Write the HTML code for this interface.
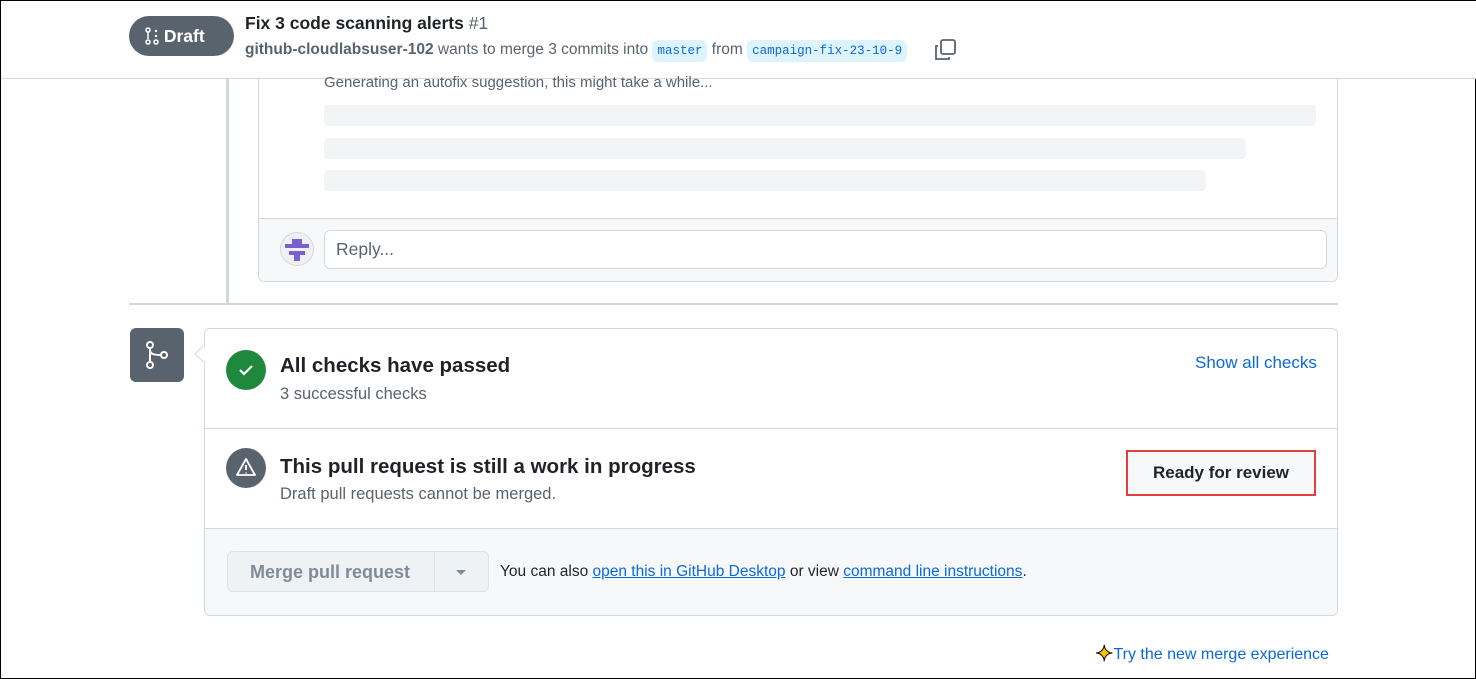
<!DOCTYPE html>
<html><head><style>
*{box-sizing:border-box;margin:0;padding:0}
body{width:1476px;height:679px;overflow:hidden;background:#fff;font-family:"Liberation Sans",sans-serif;color:#1f2328;position:relative;border:1px solid #000}
.a{position:absolute}
.sk{position:absolute;background:#f3f4f6;border-radius:4px;height:21px;left:323px}
a{color:#0969da;text-decoration:underline}
</style></head><body>
<div class="a" style="left:257px;top:78px;width:1080px;height:203px;border:1px solid #d1d9e0;border-top:none;border-radius:0 0 6px 6px;overflow:hidden">
<div class="a" style="left:0;top:139px;width:1080px;height:64px;background:#f6f8fa;border-top:1px solid #d1d9e0"></div>
</div>
<div class="a" style="left:0;top:0;width:1476px;height:78px;background:#fff;border-bottom:1px solid #d1d9e0"></div>
<div class="a" style="left:128px;top:15px;width:105px;height:40px;border-radius:20px;background:#59636e;color:#fff;font-size:17.5px;font-weight:bold;line-height:40px;padding-left:16px">
<svg width="14" height="18" viewBox="0 0 14 18" style="vertical-align:-3px"><circle cx="3" cy="3" r="2" fill="none" stroke="#fff" stroke-width="1.5"/><line x1="3" y1="5" x2="3" y2="12" stroke="#fff" stroke-width="1.5"/><circle cx="3" cy="15" r="2" fill="none" stroke="#fff" stroke-width="1.5"/><circle cx="11" cy="4" r="1.2" fill="#fff"/><circle cx="11" cy="9" r="1.2" fill="#fff"/><circle cx="11" cy="15" r="2" fill="none" stroke="#fff" stroke-width="1.5"/></svg> Draft</div>
<div class="a" style="left:244px;top:12px;font-size:17.5px;font-weight:bold;white-space:nowrap">Fix 3 code scanning alerts <span style="font-weight:normal;color:#59636e">#1</span></div>
<div class="a" style="left:244px;top:38px;font-size:15.5px;color:#59636e;white-space:nowrap;line-height:22px"><b style="color:#59636e">github-cloudlabsuser-102</b> wants to merge 3 commits into <span style="font-family:'Liberation Mono',monospace;font-size:12.5px;color:#0969da;background:#ddf4ff;padding:4px 5px;border-radius:6px">master</span> from <span style="font-family:'Liberation Mono',monospace;font-size:12.5px;color:#0969da;background:#ddf4ff;padding:4px 5px;border-radius:6px">campaign-fix-23-10-9</span></div>
<svg class="a" style="left:933px;top:38px" width="22" height="22" viewBox="0 0 22 22" fill="none" stroke="#59636e" stroke-width="1.8"><rect x="7" y="1" width="14" height="14" rx="2"/><path d="M4 7H2v13h13v-2"/></svg>

<div class="a" style="left:225px;top:78px;width:3px;height:225px;background:#d1d9e0"></div>
<div class="a" style="left:323px;top:73px;font-size:15px;color:#59636e">Generating an autofix suggestion, this might take a while...</div>
<div class="sk" style="top:104px;width:992px"></div>
<div class="sk" style="top:137px;width:922px"></div>
<div class="sk" style="top:169px;width:882px"></div>
<div class="a" style="left:279px;top:231px;width:34px;height:34px;border-radius:50%;background:#eef0f3;border:1px solid #d1d9e0;overflow:hidden">
<svg width="32" height="32" viewBox="0 0 32 32"><path d="M11 6h10v5h7v4H4v-4h7z M8 18h16v4h-5v6h-6v-6H8z" fill="#7b5fd0"/></svg></div>
<div class="a" style="left:323px;top:229px;width:1003px;height:39px;background:#fff;border:1px solid #d1d9e0;border-radius:6px;font-size:17.5px;color:#59636e;line-height:37px;padding-left:11px">Reply...</div>

<div class="a" style="left:128px;top:302px;width:1209px;height:2px;background:#d1d9e0"></div>
<div class="a" style="left:129px;top:327px;width:54px;height:54px;background:#59636e;border-radius:6px">
<svg width="54" height="54" viewBox="0 0 54 54" fill="none" stroke="#fff" stroke-width="2"><circle cx="20" cy="17" r="3"/><circle cx="20" cy="37" r="3"/><circle cx="34" cy="27" r="3"/><path d="M20 20v14M20 22c0 4 4 5 11 5"/></svg></div>
<div class="a" style="left:203px;top:327px;width:1134px;height:288px;border:1px solid #d1d9e0;border-radius:6px;overflow:hidden">
<div class="a" style="left:0;top:99px;width:1134px;height:1px;background:#d1d9e0"></div>
<div class="a" style="left:0;top:199px;width:1134px;height:90px;background:#f6f8fa;border-top:1px solid #d1d9e0"></div>
</div>
<div class="a" style="left:196px;top:347px;width:12px;height:12px;background:#fff;border-left:1px solid #d1d9e0;border-bottom:1px solid #d1d9e0;transform:rotate(45deg)"></div>
<div class="a" style="left:225px;top:349px;width:40px;height:40px;border-radius:50%;background:#1f883d">
<svg width="40" height="40" viewBox="0 0 40 40" fill="none" stroke="#fff" stroke-width="2.2"><path d="M14 20l4 4 8-8"/></svg></div>
<div class="a" style="left:279px;top:353px;font-size:20.5px;font-weight:bold;white-space:nowrap">All checks have passed</div>
<div class="a" style="left:279px;top:384px;font-size:16.5px;color:#59636e">3 successful checks</div>
<div class="a" style="left:1194px;top:352px;font-size:17px;color:#0969da">Show all checks</div>
<div class="a" style="left:225px;top:447px;width:40px;height:40px;border-radius:50%;background:#59636e">
<svg width="40" height="40" viewBox="0 0 40 40" fill="none" stroke="#fff" stroke-width="1.8"><path d="M20 11l9 16H11z" stroke-linejoin="round"/><path d="M20 17v5M20 24.5v1"/></svg></div>
<div class="a" style="left:279px;top:454px;font-size:20.5px;font-weight:bold;white-space:nowrap">This pull request is still a work in progress</div>
<div class="a" style="left:279px;top:484px;font-size:16.5px;color:#59636e">Draft pull requests cannot be merged.</div>
<div class="a" style="left:1125px;top:449px;width:190px;height:46px;border:2px solid #e0403e;background:#f6f8fa;font-size:17px;font-weight:bold;text-align:center;line-height:42px">Ready for review</div>
<div class="a" style="left:226px;top:550px;width:262px;height:41px;background:#eff2f5;border:1px solid #dde2e7;border-radius:6px;color:#818b98;font-size:18px;font-weight:bold;line-height:41px">
<span style="position:absolute;left:22px">Merge pull request</span>
<div class="a" style="left:206px;top:0;width:1px;height:39px;background:#dde2e7"></div>
<div class="a" style="left:228px;top:18px;border:5px solid transparent;border-top-color:#818b98;border-bottom:none"></div></div>
<div class="a" style="left:499px;top:562px;font-size:15.5px;white-space:nowrap">You can also <a>open this in GitHub Desktop</a> or view <a>command line instructions</a>.</div>
<div class="a" style="left:1094px;top:640px;font-size:16px;color:#0969da;white-space:nowrap"><span style="font-size:22px;color:#f5c400;-webkit-text-stroke:1px #000;vertical-align:-2px">✦</span>Try the new merge experience</div>
</body></html>
